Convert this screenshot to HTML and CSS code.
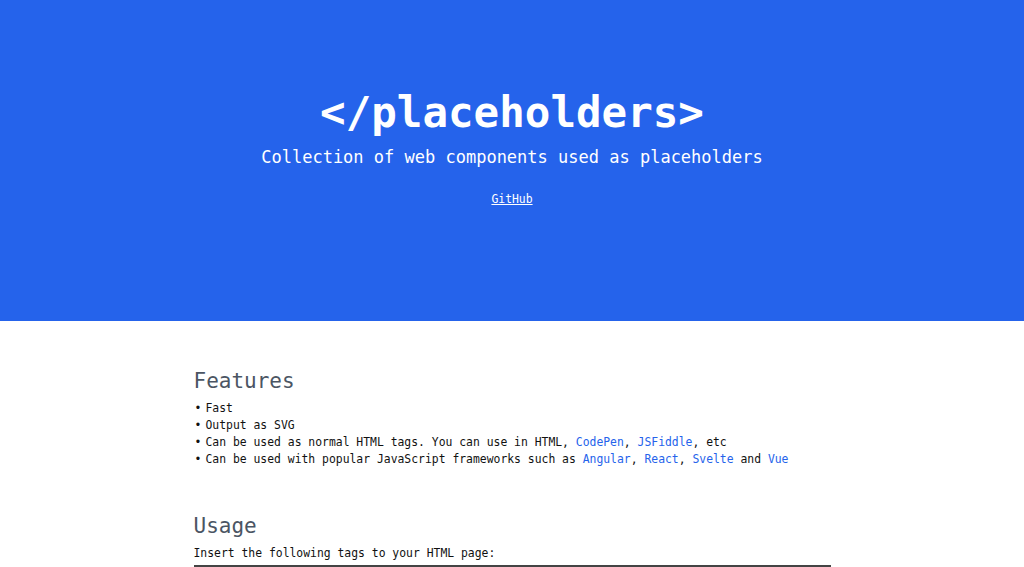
FILE: index.html
```html
<!DOCTYPE html>
<html lang="en">
<head>
<meta charset="utf-8">
<title>placeholders</title>
<link rel="stylesheet" href="styles.css">
</head>
<body>
<header class="hero">
  <h1 class="hero-title">&lt;/placeholders&gt;</h1>
  <p class="hero-sub">Collection of web components used as placeholders</p>
  <a class="hero-link" href="#">GitHub</a>
</header>
<main class="content">
  <section class="section">
    <h2 class="section-title">Features</h2>
    <ul class="features">
      <li>Fast</li>
      <li>Output as SVG</li>
      <li>Can be used as normal HTML tags. You can use in HTML, <a href="#">CodePen</a>, <a href="#">JSFiddle</a>, etc</li>
      <li>Can be used with popular JavaScript frameworks such as <a href="#">Angular</a>, <a href="#">React</a>, <a href="#">Svelte</a> and <a href="#">Vue</a></li>
    </ul>
  </section>
  <section class="section usage">
    <h2 class="section-title">Usage</h2>
    <p class="text">Insert the following tags to your HTML page:</p>
    <pre class="code"><code class="code-text">&lt;script src="placeholders.js"&gt;&lt;/script&gt;</code></pre>
  </section>
</main>
</body>
</html>
```
FILE: styles.css
```css
html, body {
  margin: 0;
  padding: 0;
}
body {
  font-family: "DejaVu Sans Mono", "Liberation Mono", monospace;
  color: #111;
  background: #fff;
}
.hero {
  background: #2563eb;
  color: #fff;
  height: 321px;
  display: flex;
  flex-direction: column;
  align-items: center;
  padding-top: 87px;
  box-sizing: border-box;
}
.hero-title {
  margin: 0;
  font-size: 42.5px;
  line-height: 52px;
  font-weight: bold;
}
.hero-sub {
  margin: 0;
  margin-top: 6px;
  font-size: 17px;
  line-height: 24px;
}
.hero-link {
  margin-top: 22px;
  color: #fff;
  font-size: 11.4px;
  line-height: 16px;
  text-decoration: underline;
}
.content {
  width: 637px;
  margin: 0 auto;
  padding-top: 45px;
}
.section-title {
  margin: 0;
  font-weight: normal;
  font-size: 21px;
  line-height: 30px;
  color: #4b5563;
}
.features {
  list-style: none;
  margin: 4px 0 0;
  padding: 0;
  font-size: 11.4px;
  line-height: 17px;
}
.features li::before {
  content: "\2022";
  display: inline-block;
  width: 11px;
  padding-left: 1px;
}
.features a, .text a {
  color: #2563eb;
  text-decoration: none;
}
.usage {
  margin-top: 43px;
}
.text {
  margin: 4px 0 0;
  font-size: 11.4px;
  line-height: 17px;
}
.code {
  margin: 3px 0 0;
  border-top: 2px solid #444;
  padding: 40px 10px 10px;
  font-size: 11.4px;
  line-height: 17px;
}
.code-text {
  font-family: "DejaVu Sans Mono", monospace;
  font-size: 11.4px;
}
```
